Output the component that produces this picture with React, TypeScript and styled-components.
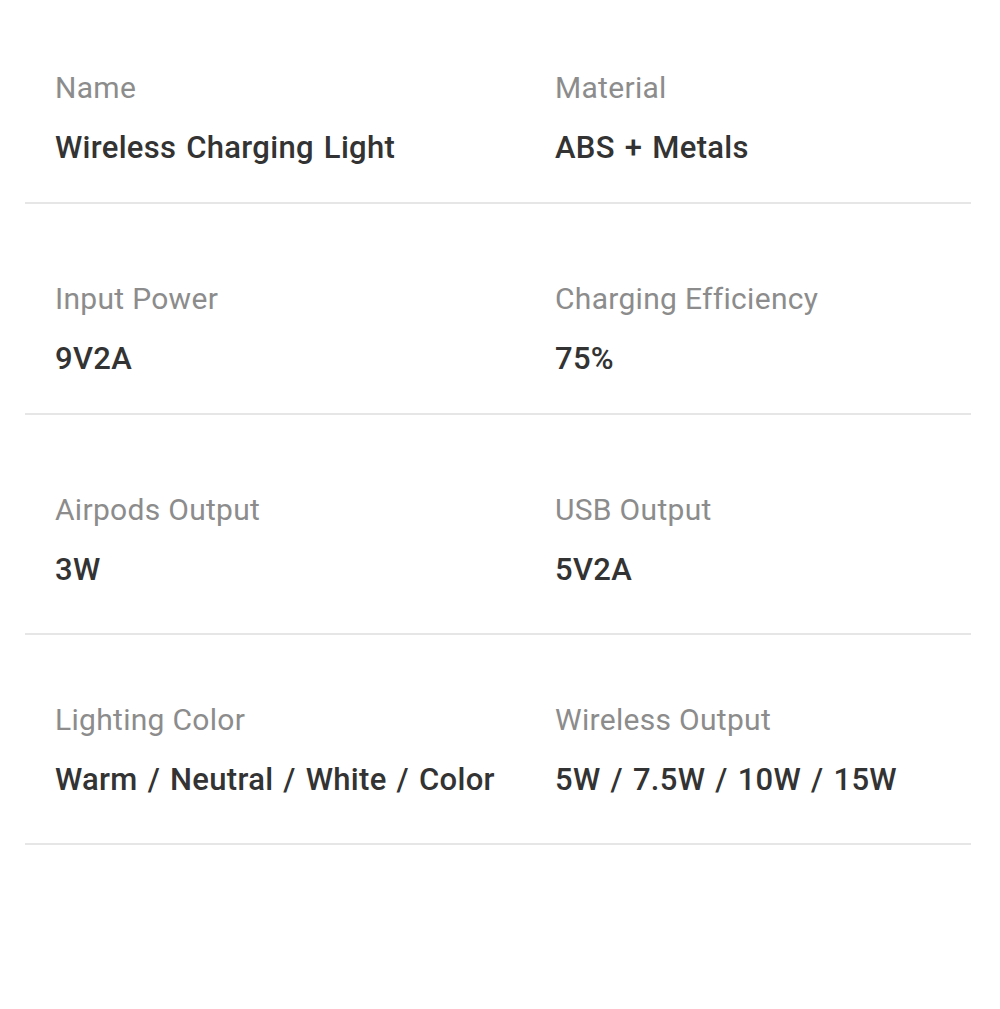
import React from 'react'
import styled, { createGlobalStyle } from 'styled-components'

const GlobalStyle = createGlobalStyle`
  html, body {
    margin: 0;
    padding: 0;
    background: #ffffff;
  }
  body {
    font-family: Roboto, "Noto Sans", "Liberation Sans", sans-serif;
  }
`

interface Spec {
  label: string
  value: string
}

interface RowData {
  top: number
  bottom: number
  cells: Spec[]
}

const rows: RowData[] = [
  {
    top: 68,
    bottom: 34,
    cells: [
      { label: 'Name', value: 'Wireless Charging Light' },
      { label: 'Material', value: 'ABS + Metals' }
    ]
  },
  {
    top: 75,
    bottom: 34,
    cells: [
      { label: 'Input Power', value: '9V2A' },
      { label: 'Charging Efficiency', value: '75%' }
    ]
  },
  {
    top: 75,
    bottom: 43,
    cells: [
      { label: 'Airpods Output', value: '3W' },
      { label: 'USB Output', value: '5V2A' }
    ]
  },
  {
    top: 65,
    bottom: 43,
    cells: [
      { label: 'Lighting Color', value: 'Warm / Neutral / White / Color' },
      { label: 'Wireless Output', value: '5W / 7.5W / 10W / 15W' }
    ]
  }
]

export default function App() {
  return (
    <>
      <GlobalStyle />
      <S.Page>
        <S.List>
          {rows.map((row, i) => (
            <S.Row key={i} $top={row.top} $bottom={row.bottom}>
              {row.cells.map(cell => (
                <S.Cell key={cell.label}>
                  <S.Label>{cell.label}</S.Label>
                  <S.Value>{cell.value}</S.Value>
                </S.Cell>
              ))}
            </S.Row>
          ))}
        </S.List>
      </S.Page>
    </>
  )
}

const S = {
  Page: styled.div`
    width: 1000px;
    min-height: 1009px;
    background: #ffffff;
    padding: 0 29px 0 25px;
    box-sizing: border-box;
  `,
  List: styled.div`
    display: flex;
    flex-direction: column;
  `,
  Row: styled.div<{ $top: number; $bottom: number }>`
    display: grid;
    grid-template-columns: 500px 1fr;
    padding: ${p => p.$top}px 0 ${p => p.$bottom}px 30px;
    border-bottom: 2px solid #e6e6e6;
  `,
  Cell: styled.div`
    display: flex;
    flex-direction: column;
    gap: 20px;
    white-space: nowrap;
  `,
  Label: styled.div`
    font-size: 30px;
    line-height: 40px;
    font-weight: 400;
    letter-spacing: 0.3px;
    color: #8c8c8c;
  `,
  Value: styled.div`
    font-size: 31px;
    line-height: 40px;
    font-weight: 500;
    letter-spacing: 0.3px;
    word-spacing: 2px;
    color: #333333;
  `
}
